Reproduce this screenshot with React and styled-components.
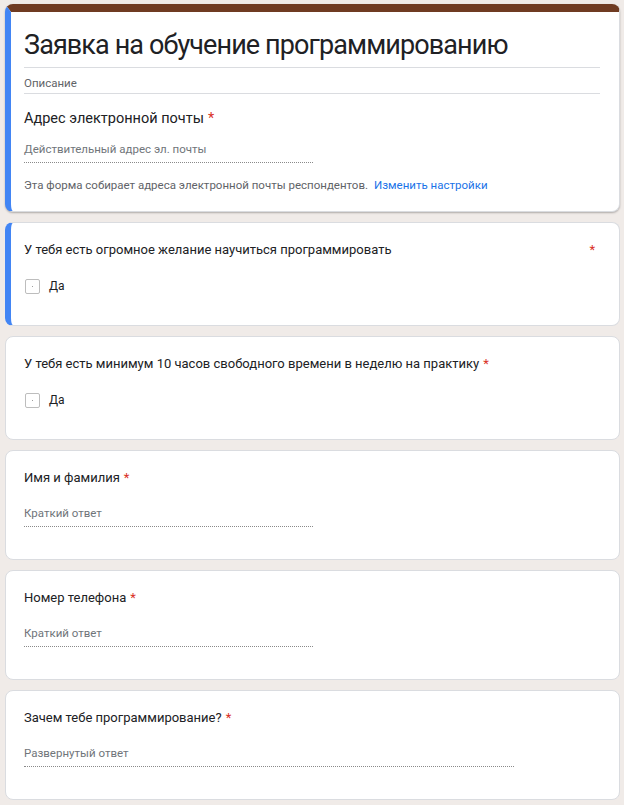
import React from "react"
import styled, { createGlobalStyle } from "styled-components"

const GlobalStyle = createGlobalStyle`
body {
  margin: 0;
  background: #f0ebe8;
  font-family: Roboto, "Liberation Sans", Arial, sans-serif;
  color: #202124;
}
`

const Page = styled.div`
display: flex;
flex-direction: column;
gap: 10px;
padding: 4px 4px 6px 5px;
`

const Card = styled.div`
background: #fff;
border: 1px solid #dadce0;
border-left: ${p => (p.$active ? "6px solid #4285f4" : "1px solid #dadce0")};
border-radius: 8px;
padding: 17px 24px ${p => p.$bottom || "31px"} ${p => (p.$active ? "13px" : "18px")};
overflow: hidden;
`

const HeaderCard = styled(Card)`
border-top: 8px solid #6f3b22;
padding-top: 13px;
padding-right: 19px;
padding-bottom: 19px;
box-shadow: 0 1px 2px rgba(0, 0, 0, 0.28);
`

const Title = styled.h1`
margin: 0;
font-size: 27px;
letter-spacing: -0.9px;
font-weight: 400;
line-height: 40px;
color: #202124;
padding-bottom: 2px;
border-bottom: 1px solid #dadce0;
`

const Description = styled.div`
font-size: 11.5px;
line-height: 14px;
color: #5f6368;
padding: 8px 0 3px;
border-bottom: 1px solid #dadce0;
`

const Question = styled.div`
display: flex;
justify-content: ${p => (p.$spread ? "space-between" : "flex-start")};
font-size: ${p => p.$size || "13px"};
line-height: 20px;
color: #202124;
margin-top: ${p => p.$top || "0"};
`

const Star = styled.span`
color: #d93025;
margin-left: 4px;
`

const AnswerLine = styled.div`
width: ${p => p.$width || "289px"};
font-size: 11.5px;
line-height: 14px;
color: #70757a;
padding-bottom: 6px;
border-bottom: 1px dotted #8a8a8a;
margin-top: ${p => p.$top || "18px"};
`

const Note = styled.div`
font-size: 11.5px;
line-height: 14px;
color: #5f6368;
margin-top: 15px;
`

const Link = styled.span`
color: #1a73e8;
margin-left: 6px;
`

const Option = styled.label`
display: flex;
align-items: center;
gap: 9px;
margin-top: 19px;
font-size: 12px;
line-height: 15px;
color: #202124;
`

const Box = styled.span`
display: flex;
align-items: center;
justify-content: center;
box-sizing: border-box;
width: 15px;
height: 15px;
border: 1px solid #bdbdbd;
border-radius: 2px;
margin-left: 1px;

&::after {
  content: "";
  width: 1px;
  height: 1px;
  background: #9e9e9e;
}
`

export default function App() {
    return (
        <Page>
            <GlobalStyle />
            <HeaderCard $active>
                <Title>Заявка на обучение программированию</Title>
                <Description>Описание</Description>
                <Question $size="14.5px" $top="15px">
                    Адрес электронной почты<Star>*</Star>
                </Question>
                <AnswerLine $top="13px">Действительный адрес эл. почты</AnswerLine>
                <Note>
                    Эта форма собирает адреса электронной почты респондентов.
                    <Link>Изменить настройки</Link>
                </Note>
            </HeaderCard>

            <Card $active>
                <Question $spread>
                    <span>У тебя есть огромное желание научиться программировать</span>
                    <Star>*</Star>
                </Question>
                <Option><Box />Да</Option>
            </Card>

            <Card>
                <Question>
                    У тебя есть минимум 10 часов свободного времени в неделю на практику<Star>*</Star>
                </Question>
                <Option><Box />Да</Option>
            </Card>

            <Card $bottom="32px">
                <Question>Имя и фамилия<Star>*</Star></Question>
                <AnswerLine>Краткий ответ</AnswerLine>
            </Card>

            <Card $bottom="32px">
                <Question>Номер телефона<Star>*</Star></Question>
                <AnswerLine>Краткий ответ</AnswerLine>
            </Card>

            <Card $bottom="32px">
                <Question>Зачем тебе программирование?<Star>*</Star></Question>
                <AnswerLine $width="490px">Развернутый ответ</AnswerLine>
            </Card>
        </Page>
    )
}
